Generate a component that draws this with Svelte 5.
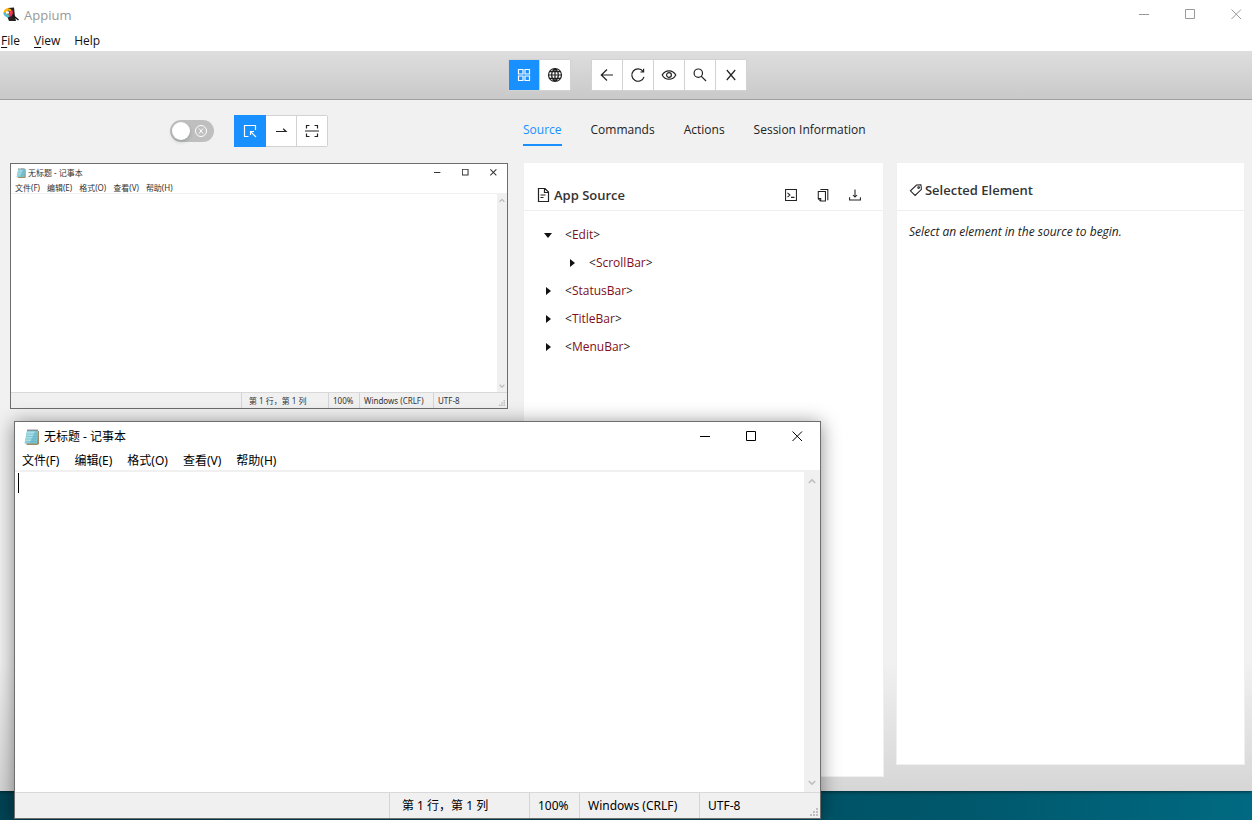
<script lang="ts">
    type Node = { tag: string; open?: boolean; children?: Node[] };

    let tabs = ["Source", "Commands", "Actions", "Session Information"];
    let activeTab = $state("Source");
    let tapOn = $state(false);

    let tree: Node[] = $state([
        { tag: "Edit", open: true, children: [{ tag: "ScrollBar" }] },
        { tag: "StatusBar" },
        { tag: "TitleBar" },
        { tag: "MenuBar" },
    ]);

    const notepadMenus = ["文件(F)", "编辑(E)", "格式(O)", "查看(V)", "帮助(H)"];
    const statusCells = ["第 1 行，第 1 列", "100%", "Windows (CRLF)", "UTF-8"];

    // 16x16 stroke icons
    const icons: Record<string, string> = {
        native: "M2.5 2.5h4.5v4.5h-4.5zM9 2.5h4.5v4.5h-4.5zM2.5 9h4.5v4.5h-4.5zM9 9h4.5v4.5h-4.5z",
        web: "M8 1.5a6.5 6.5 0 1 0 0 13a6.5 6.5 0 1 0 0-13zM8 1.5v13M1.5 8h13M8 1.5c-4.5 3.5-4.5 9.5 0 13M8 1.5c4.5 3.5 4.5 9.5 0 13M2.5 4.7h11M2.5 11.3h11",
        back: "M14 8H2.5M8 2.5L2.3 8L8 13.5",
        reload: "M13 4.3A6.2 6.2 0 1 0 14 9.8M13.6 1.8V5H10.4",
        eye: "M1.2 8C4.2 2.4 11.8 2.4 14.8 8C11.8 13.6 4.2 13.6 1.2 8zM8 5.6a2.4 2.4 0 1 0 0 4.8a2.4 2.4 0 1 0 0-4.8z",
        search: "M6.3 2a4.2 4.2 0 1 0 0 8.4a4.2 4.2 0 1 0 0-8.4zM9.4 9.4L14 14",
        close: "M3.8 3L12.2 13M12.2 3L3.8 13",
        select: "M6.5 13.5h-4v-11h11v4.5M14 14L8.6 8.6M8.5 12V8.5H12",
        swipe: "M3 8.5h10L10.2 5.8",
        tapCoords: "M2.5 5.5v-3h3M10.5 2.5h3v3M2.5 10.5v3h3M10.5 13.5h3v-3M1 8h14",
        file: "M2.5 1.5h6.500l3.500 3.500v9.500H2.500zM8.500 1.500v4h3.500M4.500 8h5M4.500 10.500h3",
        code: "M1.8 1.8h12.4v12.4H1.8zM4 5.5L6.8 8L4 10.5M8 10.7h4",
        copy: "M5 1.6h8.500v12.400M2.600 4h8.200v10.800H5.200L2.600 12.400zM2.800 12h2.600v2.700",
        download: "M8 1.8v8.6M5.6 8L8 10.4L10.4 8M1.8 10.5v3.3h12.4v-3.3",
        tag: "M8.6 2.4L13.6 2L14.2 7.2L7 14.2L1.6 9zM11 4.2a1 1 0 1 0 0 2a1 1 0 1 0 0-2z",
    };
</script>

{#snippet icon(name: string)}
    <svg class="icon" viewBox="0 0 16 16" aria-hidden="true"><path d={icons[name]} /></svg>
{/snippet}

{#snippet windowButtons()}
    <div class="window-buttons">
        <button aria-label="Minimize"><svg viewBox="0 0 11 11"><path d="M0 5.5h10" /></svg></button>
        <button aria-label="Maximize"><svg viewBox="0 0 11 11"><path d="M.5 .5h9v9h-9z" /></svg></button>
        <button aria-label="Close"><svg viewBox="0 0 11 11"><path d="M.5 .5l9.500 9.500M10 .5l-9.500 9.500" /></svg></button>
    </div>
{/snippet}

{#snippet notepad(size: string)}
    <section class="notepad {size}">
        <header>
            <svg class="pad" viewBox="0 0 16 16" aria-hidden="true">
                <path d="M4 2h11.500v13l-2 1H3z" fill="#a38b62" />
                <path d="M3.500 1.500h11.200l-1.200 13H1z" fill="#77c3d4" />
                <path d="M3.500 2.500h8l-5 11H1.600z" fill="#a9dfe8" />
                <path d="M3 5h10.500M2.800 7.500h10.500M2.500 10h10.500M2.200 12.500h10" stroke="#5aa9bb" stroke-width=".5" />
                <path d="M4 1.200h10.500" stroke="#444" stroke-width="1.500" stroke-dasharray="1 1" />
            </svg>
            <span class="caption">无标题 - 记事本</span>
            {@render windowButtons()}
        </header>
        <nav>
            {#each notepadMenus as item}
                <button>{item}</button>
            {/each}
        </nav>
        <div class="editor">
            <textarea aria-label="无标题"></textarea>
            {#if size === "full"}<i class="caret"></i>{/if}
            <div class="scrollbar">
                <svg viewBox="0 0 8 6"><path d="M.8 5L4 1.800L7.200 5" /></svg>
                <svg viewBox="0 0 8 6"><path d="M.8 1L4 4.200L7.200 1" /></svg>
            </div>
        </div>
        <footer>
            {#each statusCells as cell}
                <span>{cell}</span>
            {/each}
            <svg class="grip" viewBox="0 0 8 8" aria-hidden="true">
                <path d="M6 0h2v2h-2zM3 3h2v2h-2zM6 3h2v2h-2zM0 6h2v2h-2zM3 6h2v2h-2zM6 6h2v2h-2z" />
            </svg>
        </footer>
    </section>
{/snippet}

{#snippet branch(nodes: Node[])}
    <ul>
        {#each nodes as node}
            <li>
                <div class="row">
                    <button class="toggle" class:open={node.open} aria-label="Toggle {node.tag}" onclick={() => (node.open = !node.open)}></button>
                    <span>&lt;<b>{node.tag}</b>&gt;</span>
                </div>
                {#if node.open && node.children}
                    {@render branch(node.children)}
                {/if}
            </li>
        {/each}
    </ul>
{/snippet}

<div class="desktop">
    <div class="app">
        <header class="titlebar">
            <svg class="logo" viewBox="0 0 16 16" aria-hidden="true">
                <path d="M5 1l6-.5l1 9l1 4.500H6L4 9z" fill="#26211f" />
                <circle cx="5" cy="5.500" r="3.200" fill="none" stroke="#ffb400" stroke-width="2.300" />
                <path d="M8 3.500a3.600 3.600 0 0 1-2 5.400" fill="none" stroke="#ee2f63" stroke-width="2.500" />
                <path d="M1.600 5.500a3.600 3.600 0 0 0 4.400 3.500" fill="none" stroke="#4fb9d8" stroke-width="2.500" />
                <path d="M10 8.500l5.500 4.500" stroke="#111" stroke-width="1.500" />
                <circle cx="5" cy="5.500" r="1.300" fill="#fff" />
            </svg>
            <span>Appium</span>
            {@render windowButtons()}
        </header>
        <nav class="menubar">
            <button><u>F</u>ile</button>
            <button><u>V</u>iew</button>
            <button>Help</button>
        </nav>

        <div class="toolbar">
            <div class="group">
                <button class="primary" aria-label="Native App Mode">{@render icon("native")}</button>
                <button aria-label="Web/Hybrid App Mode">{@render icon("web")}</button>
            </div>
            <div class="group">
                <button aria-label="Back">{@render icon("back")}</button>
                <button aria-label="Refresh Source">{@render icon("reload")}</button>
                <button aria-label="Start Recording">{@render icon("eye")}</button>
                <button aria-label="Search for element">{@render icon("search")}</button>
                <button aria-label="Quit Session">{@render icon("close")}</button>
            </div>
        </div>

        <main>
            <div class="screen">
                <div class="controls">
                    <label class="switch">
                        <input type="checkbox" aria-label="Element handles" bind:checked={tapOn} />
                        <svg viewBox="0 0 14 14" aria-hidden="true">
                            <circle cx="7" cy="7" r="5.500" />
                            <path d="M5 4.500l4 5M9 4.500l-4 5" />
                        </svg>
                    </label>
                    <div class="group">
                        <button class="primary" aria-label="Select Elements">{@render icon("select")}</button>
                        <button aria-label="Swipe By Coordinates">{@render icon("swipe")}</button>
                        <button aria-label="Tap By Coordinates">{@render icon("tapCoords")}</button>
                    </div>
                </div>
                {@render notepad("mini")}
            </div>

            <div class="details">
                <div class="tabs" role="tablist">
                    {#each tabs as tab}
                        <button role="tab" aria-selected={tab === activeTab} class:active={tab === activeTab} onclick={() => (activeTab = tab)}>{tab}</button>
                    {/each}
                </div>
                <div class="cards">
                    <section class="card source">
                        <header>
                            {@render icon("file")}
                            <h2>App Source</h2>
                            <div class="actions">
                                <button aria-label="Toggle Attributes">{@render icon("code")}</button>
                                <button aria-label="Copy XML Source">{@render icon("copy")}</button>
                                <button aria-label="Download Source">{@render icon("download")}</button>
                            </div>
                        </header>
                        <div class="tree">{@render branch(tree)}</div>
                    </section>
                    <section class="card selected">
                        <header>
                            {@render icon("tag")}
                            <h2>Selected Element</h2>
                        </header>
                        <p><em>Select an element in the source to begin.</em></p>
                    </section>
                </div>
            </div>
        </main>
    </div>

    <div class="floating">{@render notepad("full")}</div>
</div>

<style>
    :global(body) {
        margin: 0;
        font: 12px/18px "Open Sans", "Noto Sans CJK SC", sans-serif;
        color: #222;
    }

    button {
        font: inherit;
        color: inherit;
        background: none;
        border: none;
        padding: 0;
    }

    .desktop {
        position: relative;
        box-sizing: border-box;
        min-height: 100vh;
        padding-bottom: 29px;
        display: flex;
        flex-direction: column;
        overflow: hidden;
        background: linear-gradient(90deg, #004354, #00566a 75%, #006a82);
    }

    .app {
        flex: 1;
        display: flex;
        flex-direction: column;
        background: linear-gradient(#f1f1f1, #f1f1f1) top / 100% calc(100% - 130px) no-repeat,
            linear-gradient(#f1f1f1, #d6d6d6) bottom / 100% 130px no-repeat;
        box-shadow: 0 1px 3px rgba(0, 0, 0, 0.5);
    }

    .icon {
        width: 16px;
        height: 16px;
        display: block;
        fill: none;
        stroke: currentColor;
        stroke-width: 1.2;
    }

    .titlebar {
        display: flex;
        align-items: center;
        height: 29px;
        padding-left: 3px;
        gap: 5px;
        background: white;
        color: #999;
    }

    .titlebar > span {
        font-size: 13px;
    }

    .logo {
        width: 16px;
        height: 16px;
    }

    .window-buttons {
        display: flex;
        margin-left: auto;
    }

    .window-buttons button {
        width: 46px;
        height: 28px;
        display: flex;
        align-items: center;
        justify-content: center;
    }

    .window-buttons svg {
        width: 11px;
        height: 11px;
        fill: none;
        stroke: currentColor;
    }

    .titlebar .window-buttons {
        margin-right: -7px;
    }

    .menubar {
        box-sizing: border-box;
        display: flex;
        gap: 14px;
        height: 22px;
        padding: 1px 0 0 1px;
        background: white;
        color: #111;
    }

    .menubar u {
        text-underline-offset: 2px;
    }

    .toolbar {
        box-sizing: border-box;
        height: 49px;
        padding-left: 2px;
        display: flex;
        align-items: center;
        justify-content: center;
        gap: 20px;
        background: linear-gradient(#dedede, #c9c9c9);
        border-bottom: 1px solid #a0a0a0;
    }

    .group {
        display: flex;
        gap: 1px;
        padding: 1px;
        border-radius: 2px;
        background: #d2d2d2;
    }

    .group button {
        width: 30px;
        height: 30px;
        display: flex;
        align-items: center;
        justify-content: center;
        background: white;
    }

    .group .primary {
        background: #1890ff;
        color: white;
        box-shadow: 0 0 0 1px #1890ff;
    }

    .toolbar .primary {
        box-shadow: none;
    }

    main {
        flex: 1;
        display: grid;
        grid-template-columns: 498fr 721fr;
        gap: 15px;
        padding: 0 8px 0 10px;
    }

    .screen,
    .details {
        display: flex;
        flex-direction: column;
        min-width: 0;
    }

    .controls {
        box-sizing: border-box;
        height: 63px;
        padding: 0 20px 1px 0;
        display: flex;
        align-items: center;
        justify-content: center;
        gap: 20px;
    }

    .switch {
        position: relative;
        display: flex;
    }

    .switch input {
        appearance: none;
        margin: 0;
        width: 44px;
        height: 22px;
        padding: 2px;
        border-radius: 11px;
        background: #bfbfbf;
    }

    .switch input::before {
        content: "";
        display: block;
        width: 18px;
        height: 18px;
        border-radius: 9px;
        background: white;
        box-shadow: 0 2px 4px rgba(0, 35, 11, 0.2);
    }

    .switch input:checked {
        background: #1890ff;
    }

    .switch input:checked::before {
        margin-left: 22px;
    }

    .switch svg {
        position: absolute;
        right: 6px;
        top: 4px;
        width: 14px;
        height: 14px;
        fill: none;
        stroke: white;
    }

    .tabs {
        display: flex;
        gap: 29px;
        height: 63px;
        box-sizing: border-box;
        padding: 16px 0 17px;
    }

    .tabs button {
        border-bottom: 2px solid transparent;
    }

    .tabs .active {
        color: #1890ff;
        border-color: #1890ff;
    }

    .cards {
        flex: 1;
        display: grid;
        grid-template-columns: 360fr 348fr;
        gap: 14px;
        padding-left: 1px;
    }

    .card {
        background: white;
        outline: 1px solid #f0f0f0;
    }

    .source {
        margin-bottom: 15px;
    }

    .selected {
        margin-bottom: 27px;
    }

    .card header {
        box-sizing: border-box;
        height: 48px;
        padding: 16px 12px 0;
        display: flex;
        align-items: center;
        gap: 2px;
        border-bottom: 1px solid #eee;
    }

    .card.selected header {
        padding-top: 6px;
    }

    h2 {
        margin: 0;
        font-size: 13px;
        font-weight: 600;
        color: #333;
    }

    .actions {
        display: flex;
        margin-left: auto;
    }

    .actions button {
        width: 32px;
        height: 24px;
        display: flex;
        align-items: center;
        justify-content: center;
    }

    .actions .icon,
    .selected .icon {
        width: 14px;
        height: 14px;
    }

    .card p {
        margin: 12px;
    }

    .tree {
        padding: 10px 12px;
    }

    .tree ul {
        list-style: none;
        margin: 0;
        padding: 0;
    }

    .tree ul :global(ul) {
        padding-left: 24px;
    }

    .row {
        display: flex;
        align-items: center;
        height: 28px;
        gap: 5px;
    }

    .row b {
        font-weight: 400;
        color: #800e1b;
    }

    .toggle {
        width: 24px;
        height: 24px;
        display: flex;
        align-items: center;
        justify-content: center;
    }

    .toggle::before {
        content: "";
        border: solid transparent;
        border-width: 4px 0 4px 5px;
        border-left-color: #111;
    }

    .toggle.open::before {
        border: solid transparent;
        border-width: 5px 4px 0;
        border-top-color: #111;
    }

    /* Notepad window, drawn once as the live window and once as its small capture */
    .notepad {
        box-sizing: border-box;
        display: flex;
        flex-direction: column;
        border: 1px solid #6e6e6e;
        background: white;
        color: #000;
        white-space: nowrap;
        font-family: "Noto Sans", "Noto Sans CJK SC", sans-serif;
    }

    .notepad header {
        display: flex;
        align-items: center;
        gap: 4px;
        height: 29px;
        padding-left: 8px;
    }

    .pad {
        width: 17px;
        height: 16px;
    }

    .notepad nav {
        display: flex;
        gap: 15px;
        height: 19px;
        padding-left: 7px;
        border-bottom: 2px solid #f0f0f0;
    }

    .editor {
        position: relative;
        flex: 1;
        display: flex;
    }

    .editor textarea {
        flex: 1;
        min-width: 0;
        min-height: 0;
        border: none;
        outline: none;
        resize: none;
        padding: 0 4px;
    }

    .caret {
        position: absolute;
        left: 3px;
        top: 1px;
        width: 1px;
        height: 20px;
        background: black;
    }

    .scrollbar {
        box-sizing: border-box;
        width: 16px;
        padding: 6px 4px;
        display: flex;
        flex-direction: column;
        justify-content: space-between;
        background: #f0f0f0;
    }

    .scrollbar svg {
        fill: none;
        stroke: #bcbcbc;
        stroke-width: 1.6;
    }

    .notepad footer {
        position: relative;
        display: flex;
        justify-content: flex-end;
        height: 25px;
        border-top: 1px solid #d9d9d9;
        background: #f0f0f0;
    }

    footer span {
        box-sizing: border-box;
        padding-left: 8px;
        border-left: 1px solid #d4d4d4;
        line-height: 25px;
    }

    footer span:nth-child(1) {
        width: 140px;
        padding-left: 12px;
    }

    footer span:nth-child(2) {
        width: 50px;
    }

    footer span:nth-child(3) {
        width: 120px;
    }

    footer span:nth-child(4) {
        width: 121px;
    }

    .grip {
        position: absolute;
        right: 2px;
        bottom: 2px;
        width: 8px;
        height: 8px;
        fill: #bfbfbf;
    }

    .floating {
        position: absolute;
        left: 14px;
        bottom: 1px;
        width: 807px;
        height: 398px;
        display: flex;
        box-shadow: 0 2px 18px rgba(0, 0, 0, 0.45);
    }

    .full {
        flex: 1;
    }

    .mini {
        aspect-ratio: 498 / 246;
        font-size: 8px;
        line-height: 11px;
        color: #333;
    }

    .mini header {
        height: 17px;
        gap: 2px;
        padding-left: 5px;
    }

    .mini .pad {
        width: 10px;
        height: 10px;
    }

    .mini .window-buttons button {
        width: 28px;
        height: 17px;
    }

    .mini .window-buttons svg {
        width: 7px;
        height: 7px;
        stroke-width: 1.6;
    }

    .mini nav {
        height: 12px;
        gap: 7px;
        padding-left: 4px;
        border-bottom-width: 1px;
    }

    .mini .scrollbar {
        width: 10px;
        padding: 4px 2px;
    }

    .mini footer {
        height: 15px;
    }

    .mini footer span {
        padding-left: 4px;
        line-height: 16px;
    }

    .mini footer span:nth-child(1) {
        width: 87px;
        padding-left: 7px;
    }

    .mini footer span:nth-child(2) {
        width: 31px;
    }

    .mini footer span:nth-child(3),
    .mini footer span:nth-child(4) {
        width: 74px;
    }

    .mini .grip {
        width: 6px;
        height: 6px;
    }
</style>
